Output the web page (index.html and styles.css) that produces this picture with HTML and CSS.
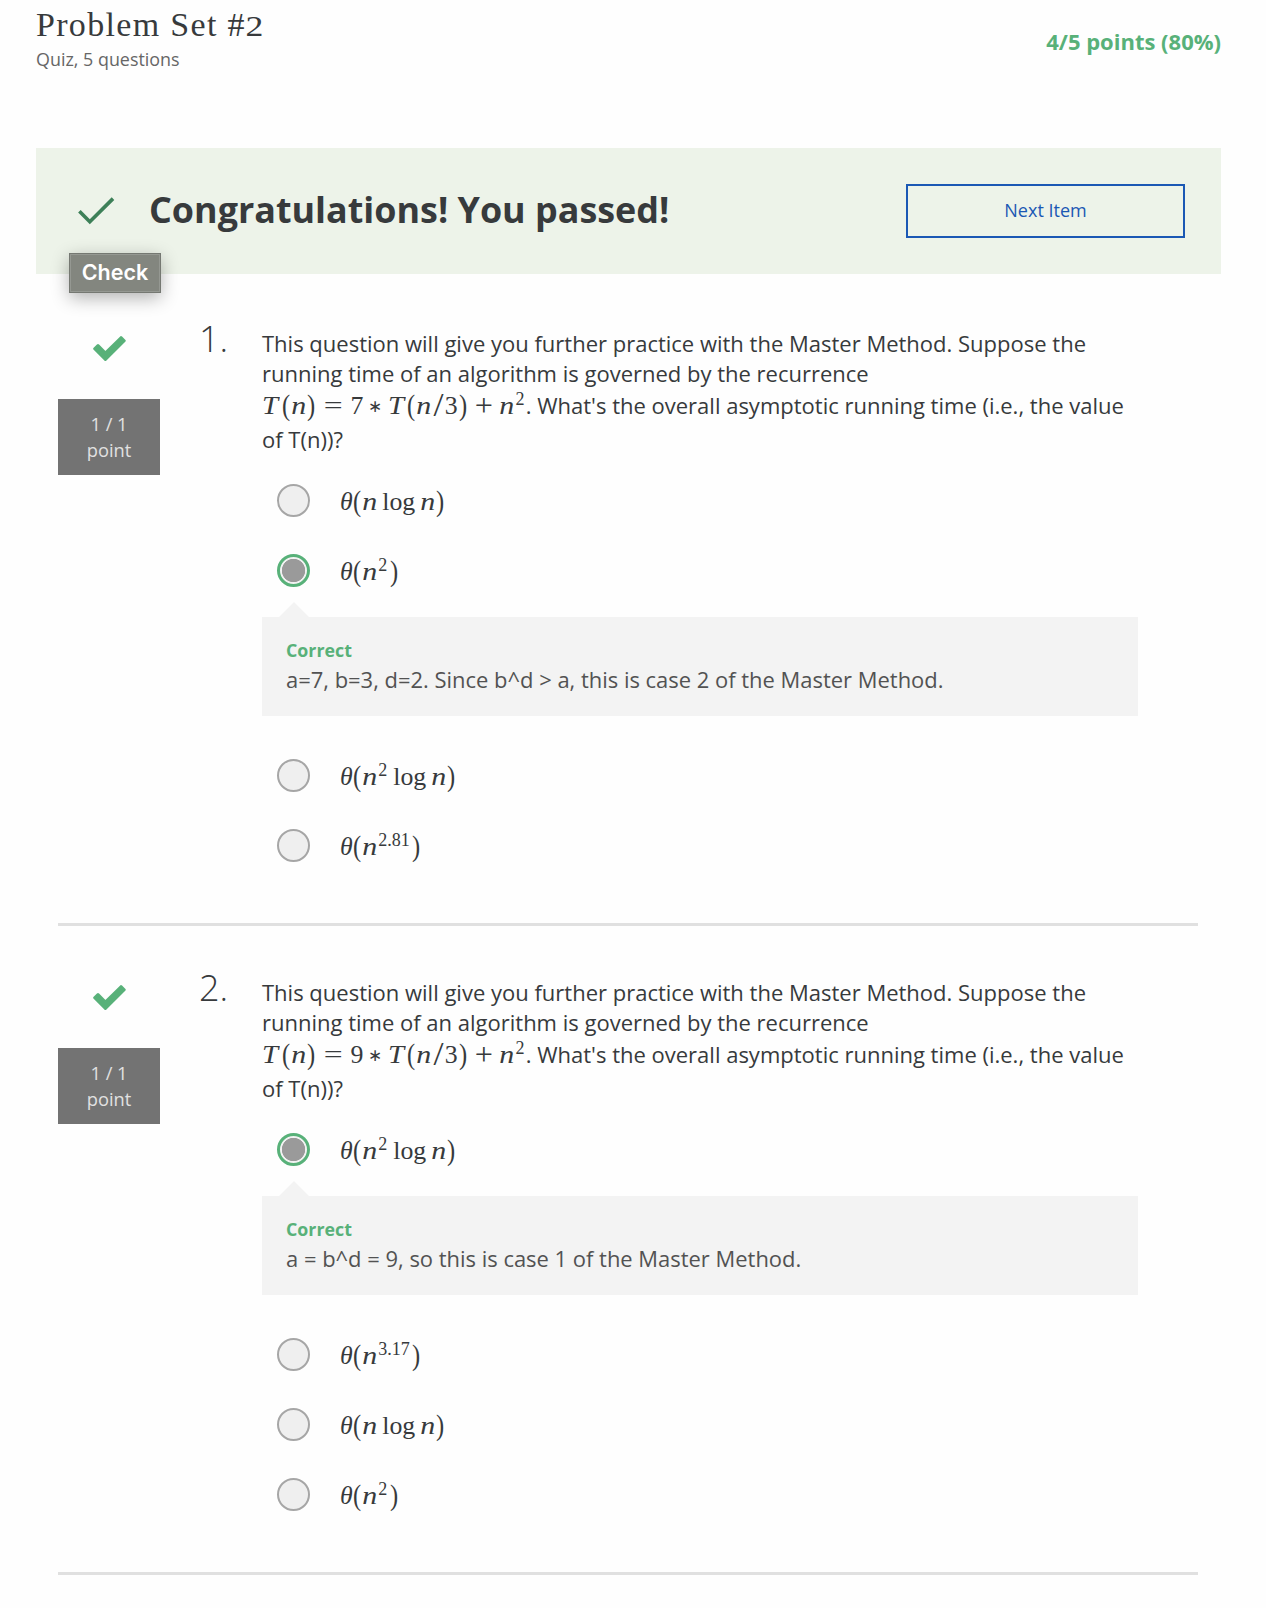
FILE: index.html
```html
<!DOCTYPE html>
<html lang="en">
<head>
<meta charset="utf-8">
<title>Problem Set #2</title>
<link rel="stylesheet" href="styles.css">
</head>
<body>
<header class="header">
  <div>
    <h1 class="title">Problem Set #<span class="oldstyle">2</span></h1>
    <p class="subtitle">Quiz, 5 questions</p>
  </div>
  <p class="score">4/5 points (80%)</p>
</header>
<section class="banner">
  <svg class="banner-check" viewBox="0 0 38 30"><path d="M2.4 15.2 12.8 25.7 36 2.6" fill="none" stroke="#3d8058" stroke-width="3.6"/></svg>
  <h2 class="banner-title">Congratulations! You passed!</h2>
  <a class="next">Next Item</a>
  <span class="tooltip">Check</span>
</section>
<main class="questions">
  <article class="question">
    <aside class="status">
      <svg class="tick" viewBox="0 0 33 25"><path d="M5 9.5 1.7 12.8 12.4 23.4 31.2 4.8 28 1.7 12.4 17Z" fill="#58b179" stroke="#58b179" stroke-width="3" stroke-linejoin="round"/></svg>
      <div class="points">1 / 1<br>point</div>
    </aside>
    <div class="number">1.</div>
    <div class="body">
      <p class="prompt">
        <span class="line">This question will give you further practice with the Master Method. Suppose the</span>
        <span class="line">running time of an algorithm is governed by the recurrence</span>
        <span class="line tall"><span class="math"><i class="T">T</i><b class="p">(</b><i class="n">n</i><b class="p">)</b><b class="rel">=</b><b class="d">7</b><b class="ast">∗</b><i class="T">T</i><b class="p">(</b><i class="n">n</i><b class="sl">/</b><b class="d">3</b><b class="p">)</b><b class="plus">+</b><i class="n">n</i><sup>2</sup></span>. What's the overall asymptotic running time (i.e., the value</span>
        <span class="line tall">of T(n))?</span>
      </p>
      <div class="option"><span class="radio"></span><span class="math"><i class="th">θ</i><b class="p">(</b><i class="n">n</i><b class="log">log</b><i class="n">n</i><b class="p">)</b></span></div>
      <div class="option"><span class="radio checked"></span><span class="math"><i class="th">θ</i><b class="p">(</b><i class="n">n</i><sup>2</sup><b class="p">)</b></span></div>
      <div class="feedback"><strong>Correct</strong><p>a=7, b=3, d=2. Since b^d &gt; a, this is case 2 of the Master Method.</p></div>
      <div class="option"><span class="radio"></span><span class="math"><i class="th">θ</i><b class="p">(</b><i class="n">n</i><sup>2</sup><b class="log">log</b><i class="n">n</i><b class="p">)</b></span></div>
      <div class="option"><span class="radio"></span><span class="math"><i class="th">θ</i><b class="p">(</b><i class="n">n</i><sup>2.81</sup><b class="p">)</b></span></div>
    </div>
  </article>
  <article class="question">
    <aside class="status">
      <svg class="tick" viewBox="0 0 33 25"><path d="M5 9.5 1.7 12.8 12.4 23.4 31.2 4.8 28 1.7 12.4 17Z" fill="#58b179" stroke="#58b179" stroke-width="3" stroke-linejoin="round"/></svg>
      <div class="points">1 / 1<br>point</div>
    </aside>
    <div class="number">2.</div>
    <div class="body">
      <p class="prompt">
        <span class="line">This question will give you further practice with the Master Method. Suppose the</span>
        <span class="line">running time of an algorithm is governed by the recurrence</span>
        <span class="line tall"><span class="math"><i class="T">T</i><b class="p">(</b><i class="n">n</i><b class="p">)</b><b class="rel">=</b><b class="d">9</b><b class="ast">∗</b><i class="T">T</i><b class="p">(</b><i class="n">n</i><b class="sl">/</b><b class="d">3</b><b class="p">)</b><b class="plus">+</b><i class="n">n</i><sup>2</sup></span>. What's the overall asymptotic running time (i.e., the value</span>
        <span class="line tall">of T(n))?</span>
      </p>
      <div class="option"><span class="radio checked"></span><span class="math"><i class="th">θ</i><b class="p">(</b><i class="n">n</i><sup>2</sup><b class="log">log</b><i class="n">n</i><b class="p">)</b></span></div>
      <div class="feedback"><strong>Correct</strong><p>a = b^d = 9, so this is case 1 of the Master Method.</p></div>
      <div class="option"><span class="radio"></span><span class="math"><i class="th">θ</i><b class="p">(</b><i class="n">n</i><sup>3.17</sup><b class="p">)</b></span></div>
      <div class="option"><span class="radio"></span><span class="math"><i class="th">θ</i><b class="p">(</b><i class="n">n</i><b class="log">log</b><i class="n">n</i><b class="p">)</b></span></div>
      <div class="option"><span class="radio"></span><span class="math"><i class="th">θ</i><b class="p">(</b><i class="n">n</i><sup>2</sup><b class="p">)</b></span></div>
    </div>
  </article>
</main>
</body>
</html>
```
FILE: styles.css
```css
* { box-sizing: border-box; }
body { margin: 0; background: #fefefe; color: #373a3c; font-family: "Open Sans", sans-serif; }
h1, h2, p { margin: 0; }
.header { display: flex; justify-content: space-between; align-items: flex-start; height: 148px; padding: 5px 45px 0 36px; }
.title { font: 400 34px/40px "Liberation Serif", serif; letter-spacing: 1.32px; white-space: nowrap; }
.oldstyle { display: inline-block; transform: scale(1.05, .84); transform-origin: 50% 78%; }
.subtitle { margin-top: 1px; font-size: 17.9px; line-height: 26px; color: #666; }
.score { font-size: 22px; font-weight: 700; line-height: 30px; color: #58b179; margin-top: 21px; }
.banner { position: relative; display: flex; align-items: center; height: 126px; margin: 0 45px 0 36px; padding: 0 36px 0 41px; background: #edf3e9; }
.banner-check { width: 38px; height: 30px; }
.banner-title { margin: -2px 0 0 34px; font-size: 35.9px; line-height: 50px; font-weight: 700; white-space: nowrap; }
.next { margin-left: auto; width: 279px; height: 54px; border: 2px solid #1b58b4; color: #1b58b4; font-size: 18px; line-height: 48px; text-align: center; }
.tooltip { position: absolute; left: 33px; top: 105px; width: 92px; height: 40px; border: 1px solid #757872; background: #83867f; box-shadow: inset 0 0 0 1px #959892, 0 5px 18px rgba(0,0,0,.3); color: #fff; font: 600 21.5px/36px Inter, sans-serif; text-align: center; }
.questions { padding: 0 68px 0 58px; }
.question { display: flex; height: 652px; padding-top: 55px; border-bottom: 3px solid #e0e0e0; }
.question + .question { height: 649px; padding-top: 52px; }
.status { width: 102px; padding-top: 7px; }
.tick { display: block; width: 33px; height: 25px; margin: 0 0 38px 34.5px; }
.points { height: 76px; padding: 12px 0; background: #737373; color: #e1e1e1; font-size: 18.3px; line-height: 26px; text-align: center; }
.number { width: 102px; padding-left: 39px; font-size: 36px; line-height: 50px; font-weight: 300; margin-top: -15px; }
.body { width: 876px; margin-top: -1px; }
.prompt { font-size: 22px; height: 137px; }
.line { display: block; line-height: 30px; height: 30px; white-space: nowrap; }
.tall { line-height: 34px; height: 34px; }
.option { display: flex; align-items: center; height: 70px; padding-left: 15px; }
.option .math { margin: 4px 0 0 30px; line-height: 34px; }
.radio { width: 33px; height: 33px; border: 2px solid #a6a6a6; border-radius: 50%; background: #efefef; }
.radio.checked { border: 3px solid #58b179; background: radial-gradient(circle, #9a9a9a 11.3px, #f2f2f2 12px); }
.feedback { position: relative; height: 99px; margin: 12px 0 24px; padding: 20px 24px 0; background: #f3f3f3; color: #525252; font-size: 21.95px; }
.feedback::before { content: ""; position: absolute; left: 17px; top: -15px; border: 15px solid transparent; border-top: 0; border-bottom-color: #f3f3f3; }
.feedback strong { display: block; font-size: 17.8px; line-height: 26px; color: #58b179; }
.feedback p { margin-top: 2px; line-height: 30px; white-space: nowrap; }
.math { display: inline-block; font-family: "Liberation Serif", serif; font-size: 25.8px; line-height: 1; white-space: nowrap; }
.math b, .math i { display: inline-block; font-weight: 400; text-align: center; }
.math .T { width: .723em; text-align: left; transform: scaleX(1.12); transform-origin: 0 50%; }
.math .p { width: .389em; transform: scale(.95, 1.15); }
.math .n { width: .6em; transform: scaleX(1.16); }
.math .d { width: .5em; }
.math .rel { width: 1.334em; transform: scaleX(1.3); }
.math .plus { width: 1.222em; transform: scale(1.25); }
.math .ast { width: .944em; transform: scale(.66); transform-origin: 50% 60%; }
.math .sl { width: .5em; transform: scale(1.4, 1.3); }
.math .th { width: .469em; }
.math .log { margin: 0 .18em; }
.math sup { display: inline-block; font-size: .7em; line-height: 1; vertical-align: .48em; margin: 0 .07em 0 .04em; }
```
